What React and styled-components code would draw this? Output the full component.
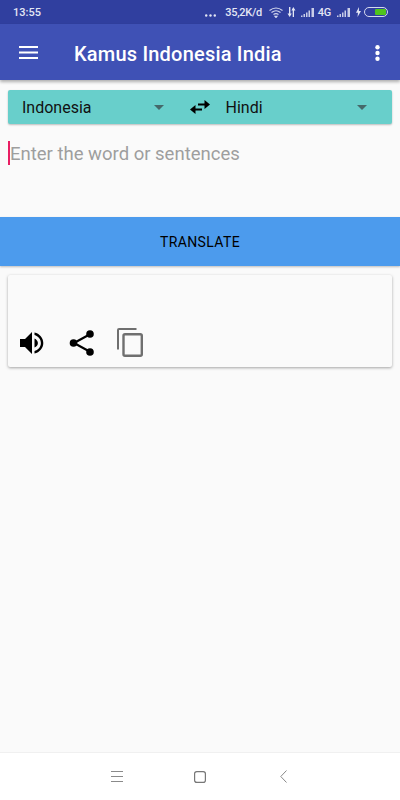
import React from 'react';
import styled, { createGlobalStyle } from 'styled-components';

const Global = createGlobalStyle`
    html, body {
        margin: 0;
        padding: 0;
        background: #fafafa;
    }
`;

const App = () => {
    return (
        <Page>
            <Global />
            <StatusBar>
                <Time>13:55</Time>
                <StatusRight>
                    <StatusIcon width="11" height="3" viewBox="0 0 11 3" fill="#e3e6f4" $top="7px">
                        <circle cx="1.200" cy="1.500" r="1.200" />
                        <circle cx="5.500" cy="1.500" r="1.200" />
                        <circle cx="9.800" cy="1.500" r="1.200" />
                    </StatusIcon>
                    <StatusText $gap="9px">35,2K/d</StatusText>
                    <StatusIcon width="14" height="11" viewBox="0 0 14 11" fill="none" stroke="#d5d9ee" strokeWidth="1.100" $gap="7px">
                        <path d="M.5 3.500 Q7 -1.500 13.500 3.500" />
                        <path d="M2.500 5.500 Q7 2 11.500 5.500" />
                        <path d="M4.500 7.500 Q7 5.800 9.500 7.500" />
                        <path d="M6 9.300 L7 10.500 L8 9.300 Z" fill="#d5d9ee" />
                    </StatusIcon>
                    <StatusIcon width="9" height="10" viewBox="0 0 9 10" fill="#e3e6f4" $gap="4px">
                        <path d="M2 0h1.400v6.500H4.800L2.700 10 .5 6.500H2z" />
                        <path d="M7 10H5.700V3.500H4.400L6.300 0l2.200 3.500H7z" />
                    </StatusIcon>
                    <Signal $gap="5px" />
                    <StatusText $gap="4px">4G</StatusText>
                    <Signal $gap="6px" />
                    <StatusIcon width="5" height="10" viewBox="0 0 5 10" fill="#e3e6f4" $gap="6px">
                        <path d="M3 0 0 5.700h2L1.500 10 5 4H2.900z" />
                    </StatusIcon>
                    <Battery><BatteryLevel /></Battery>
                </StatusRight>
            </StatusBar>
            <AppBar>
                <MenuIcon width="19" height="13" viewBox="0 0 19 13" fill="#fff">
                    <rect y="0" width="19" height="2" />
                    <rect y="5.500" width="19" height="2" />
                    <rect y="11" width="19" height="2" />
                </MenuIcon>
                <Title>Kamus Indonesia India</Title>
                <OverflowIcon width="5" height="16" viewBox="0 0 5 16" fill="#fff">
                    <circle cx="2.500" cy="2.300" r="2.200" />
                    <circle cx="2.500" cy="8" r="2.200" />
                    <circle cx="2.500" cy="13.700" r="2.200" />
                </OverflowIcon>
            </AppBar>
            <Main>
                <LanguageBar>
                    <Language>
                        <span>Indonesia</span>
                        <Caret />
                    </Language>
                    <SwapIcon width="20" height="16" viewBox="0 0 20 16" fill="#000">
                        <path d="M5.500 6 0 10.500 5.500 15v-3.400H12V9.400H5.500z" />
                        <path d="M14.500 1v3.400H8v2.200h6.500V10L20 5.500z" />
                    </SwapIcon>
                    <Language>
                        <span>Hindi</span>
                        <Caret />
                    </Language>
                </LanguageBar>
                <InputArea>
                    <Cursor />
                    <Placeholder>Enter the word or sentences</Placeholder>
                </InputArea>
                <TranslateButton>TRANSLATE</TranslateButton>
                <ResultCard>
                    <Actions>
                        <svg width="26" height="26" viewBox="0 0 26 26" fill="#000">
                            <path d="M1 9v8h5l7 7V2L6 9z" />
                            <path d="M15.500 8.400v9.200c2-1 3.400-2.600 3.400-4.600S17.500 9.400 15.500 8.400z" />
                            <path d="M15.500 2.500v2.400c3.600 1 6.400 4.200 6.400 8.100s-2.800 7.100-6.400 8.100v2.400c5-1.100 8.800-5.300 8.800-10.500S20.500 3.600 15.500 2.500z" />
                        </svg>
                        <svg width="26" height="28" viewBox="0 0 26 28" fill="#000" stroke="#000">
                            <path d="M20.500 5.500 5 14l15.500 8.500" fill="none" strokeWidth="2.200" />
                            <circle cx="4.500" cy="14" r="3.800" stroke="none" />
                            <circle cx="21" cy="5" r="3.800" stroke="none" />
                            <circle cx="21" cy="23" r="3.800" stroke="none" />
                        </svg>
                        <CopyIcon width="26" height="29" viewBox="0 0 26 29" fill="none" stroke="#6f6f6f" strokeWidth="2">
                            <path d="M1 21.500V2a1 1 0 0 1 1-1h17.500" />
                            <rect x="6.500" y="6.200" width="18.300" height="21.600" rx="1.500" strokeWidth="2.400" />
                        </CopyIcon>
                    </Actions>
                </ResultCard>
            </Main>
            <NavBar>
                <NavCell>
                    <svg width="12" height="11" viewBox="0 0 12 11" stroke="#8a8a8a" strokeWidth="1">
                        <path d="M0 .5h12M0 5.500h12M0 10.500h12" />
                    </svg>
                </NavCell>
                <NavCell>
                    <svg width="12" height="12" viewBox="0 0 12 12" fill="none" stroke="#777" strokeWidth="1.200">
                        <rect x=".6" y=".6" width="10.800" height="10.800" rx="2.200" />
                    </svg>
                </NavCell>
                <NavCell>
                    <svg width="7" height="13" viewBox="0 0 7 13" fill="none" stroke="#888" strokeWidth="1">
                        <path d="M6.500.5.800 6.500l5.700 6" />
                    </svg>
                </NavCell>
            </NavBar>
        </Page>
    );
};

export default App;

const Signal = ({ $gap }) => (
    <StatusIcon width="13" height="9" viewBox="0 0 13 9" fill="#c9cee8" $gap={$gap}>
        <path d="M0 9h1.500V7.500H0zM2.500 9H4V6H2.500zM5 9h1.500V4.500H5zM7.500 9H9V2.500H7.500zM10.500 9H13V0h-2.500z" />
    </StatusIcon>
);

const Page = styled.div`
    width: 400px;
    height: 800px;
    display: flex;
    flex-direction: column;
    background: #fafafa;
    overflow: hidden;
    font-family: Roboto, "Liberation Sans", sans-serif;
`;

const StatusBar = styled.div`
    height: 24px;
    flex: none;
    display: flex;
    align-items: center;
    justify-content: space-between;
    padding: 0 12px 0 13px;
    background: #303f9f;
    color: #e3e6f4;
`;

const Time = styled.div`
    font-size: 11px;
    font-weight: 500;
`;

const StatusRight = styled.div`
    display: flex;
    align-items: center;
`;

const StatusIcon = styled.svg`
    flex: none;
    margin-left: ${(p) => p.$gap || 0};
    margin-top: ${(p) => p.$top || 0};
`;

const StatusText = styled.span`
    margin-left: ${(p) => p.$gap || 0};
    font-size: 11px;
    font-weight: 500;
    letter-spacing: -0.3px;
`;

const Battery = styled.div`
    width: 20px;
    height: 6px;
    margin-left: 3px;
    padding: 1px;
    display: flex;
    justify-content: flex-end;
    border: 1px solid #d5d9ee;
    border-radius: 5px;
`;

const BatteryLevel = styled.div`
    width: 11px;
    background: #4fc41c;
    border-radius: 1px;
`;

const AppBar = styled.div`
    height: 56px;
    flex: none;
    display: flex;
    align-items: center;
    padding: 0 20px 0 19px;
    background: #3f51b5;
    box-shadow: 0 2px 3px rgba(0, 0, 0, 0.3);
    position: relative;
`;

const MenuIcon = styled.svg`
    flex: none;
    margin-right: 36px;
    margin-top: 1px;
`;

const Title = styled.div`
    flex: 1;
    margin-top: 3px;
    color: #fff;
    font-size: 20px;
    font-weight: 500;
    letter-spacing: 0.2px;
`;

const OverflowIcon = styled.svg`
    flex: none;
    margin-top: 2px;
`;

const Main = styled.div`
    flex: 1;
    display: flex;
    flex-direction: column;
    padding-top: 10px;
`;

const LanguageBar = styled.div`
    height: 34px;
    margin: 0 8px;
    display: flex;
    align-items: center;
    background: #68cfcb;
    border-radius: 2px;
    box-shadow: 0 1px 2px rgba(0, 0, 0, 0.25);
`;

const Language = styled.div`
    flex: 1;
    display: flex;
    align-items: center;
    justify-content: space-between;
    padding: 0 25px 0 14px;
    font-size: 16px;
    color: #111;
`;

const Caret = styled.div`
    width: 0;
    height: 0;
    border-left: 5px solid transparent;
    border-right: 5px solid transparent;
    border-top: 5px solid #45696a;
`;

const SwapIcon = styled.svg`
    flex: none;
    margin: 0 2px 0 1px;
`;

const InputArea = styled.div`
    height: 93px;
    box-sizing: border-box;
    display: flex;
    align-items: flex-start;
    padding: 17px 8px 0;
`;

const Cursor = styled.div`
    width: 2px;
    height: 24px;
    flex: none;
    background: #e91e63;
`;

const Placeholder = styled.div`
    font-size: 18.500px;
    line-height: 26px;
    color: #9e9e9e;
`;

const TranslateButton = styled.div`
    height: 49px;
    display: flex;
    align-items: center;
    justify-content: center;
    background: #4c9bed;
    font-size: 14px;
    font-weight: 400;
    letter-spacing: 0.4px;
    color: #000;
    box-shadow: 0 1px 2px rgba(0, 0, 0, 0.25);
`;

const ResultCard = styled.div`
    height: 92px;
    box-sizing: border-box;
    margin: 9px 8px 0;
    display: flex;
    align-items: flex-end;
    padding: 0 11px 10px;
    background: #fafafa;
    border-radius: 2px;
    box-shadow: 0 1px 3px rgba(0, 0, 0, 0.35);
`;

const Actions = styled.div`
    display: flex;
    align-items: center;
    gap: 24px;
`;

const CopyIcon = styled.svg`
    margin-left: -2px;
`;

const NavBar = styled.div`
    height: 48px;
    flex: none;
    display: flex;
    align-items: center;
    justify-content: center;
    background: #fff;
    border-top: 1px solid #f0f0f0;
    box-sizing: border-box;
`;

const NavCell = styled.div`
    width: 83px;
    display: flex;
    justify-content: center;
`;
